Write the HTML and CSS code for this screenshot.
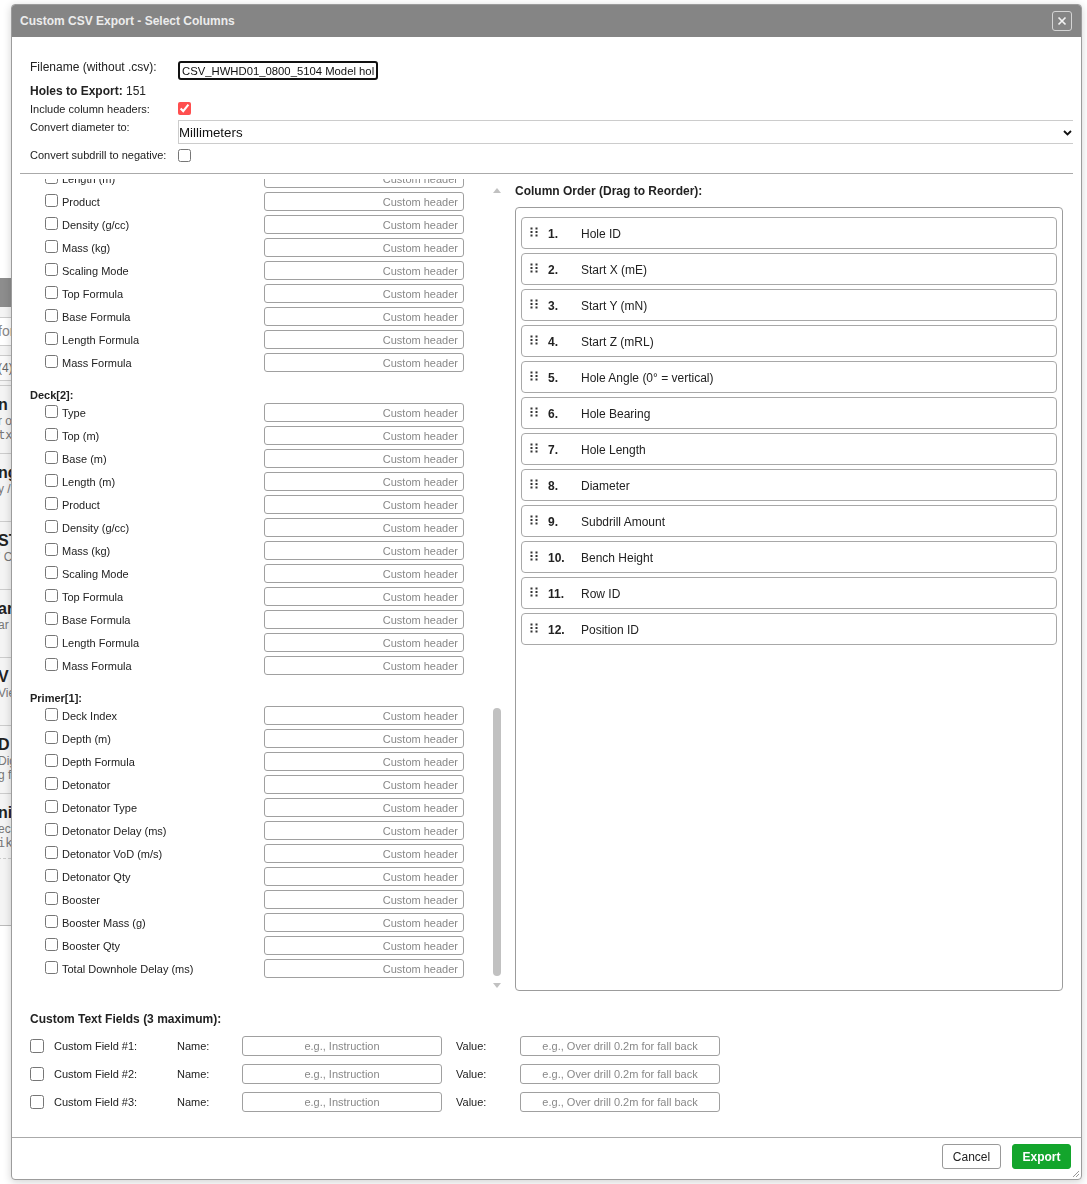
FILE: index.html
```html
<!DOCTYPE html>
<html lang="en">
<head>
  <meta charset="UTF-8">
  <title>Custom CSV Export</title>
  <link rel="stylesheet" href="styles.css">
</head>
<body>

  <div class="page">
    <div class="side">
      <div class="side-head">Patterns</div>
      <div class="side-search">for pattern</div>
      <div class="side-tabs">(4) holes</div>
      <div class="side-card"><b>n Options</b><span>r or</span><code>txt</code></div>
      <div class="side-card"><b>ng Tools</b><span>y / x</span></div>
      <div class="side-card"><b>ST Check</b><span>' Check</span></div>
      <div class="side-card"><b>ar Mode</b><span>ar list</span></div>
      <div class="side-card"><b>V View</b><span>View</span></div>
      <div class="side-card"><b>D Data</b><span>Dig data</span><span>g file</span></div>
      <div class="side-card tall"><b>nit Sec</b><span>ecl</span><code>ik</code><i></i></div>
    </div>
  </div>

  <div class="dlg">
    <div class="dlg-title">
      <span>Custom CSV Export - Select Columns</span>
      <button class="dlg-close">
        <svg width="10" height="10" viewBox="0 0 10 10"><path d="M1.5 1.5 L8.5 8.5 M8.5 1.5 L1.5 8.5" stroke="#f2f2f2" stroke-width="1.7"/></svg>
      </button>
    </div>

    <div class="dlg-body">
      <div class="opts">
        <div class="opt-row">
          <div class="opt-label big">Filename (without .csv):</div>
          <input class="fname" type="text" value="CSV_HWHD01_0800_5104 Model holes">
        </div>
        <div class="opt-row holes"><b>Holes to Export:</b>&nbsp;151</div>
        <div class="opt-row">
          <div class="opt-label">Include column headers:</div>
          <input class="chk red" type="checkbox" checked>
        </div>
        <div class="opt-row">
          <div class="opt-label">Convert diameter to:</div>
          <div class="sel-wrap">
            <select class="sel">
              <option>Millimeters</option>
              <option>Meters</option>
            </select>
            <svg class="sel-arrow" width="9" height="6" viewBox="0 0 9 6"><path d="M1 1 L4.5 4.5 L8 1" fill="none" stroke="#111" stroke-width="1.8"/></svg>
          </div>
        </div>
        <div class="opt-row">
          <div class="opt-label">Convert subdrill to negative:</div>
          <input class="chk" type="checkbox">
        </div>
      </div>

      <hr class="sep">

      <div class="cols">
        <div class="field-pane">
          <div class="field-list" id="fieldList"></div>
          <div class="vbar">
            <svg width="8" height="5" viewBox="0 0 8 5"><path d="M4 0 L8 5 L0 5 Z" fill="#c1c1c1"/></svg>
            <div class="vbar-track"><div class="vbar-thumb"></div></div>
            <svg width="8" height="5" viewBox="0 0 8 5"><path d="M0 0 L8 0 L4 5 Z" fill="#c1c1c1"/></svg>
          </div>
        </div>
        <div class="order">
          <div class="order-title">Column Order (Drag to Reorder):</div>
          <div class="order-box" id="orderBox"></div>
        </div>
      </div>

      <div class="custom">
        <div class="cf-title">Custom Text Fields (3 maximum):</div>
        <div class="cf-row">
          <input type="checkbox">
          <span class="cf-label">Custom Field #1:</span>
          <span class="cf-name">Name:</span>
          <input type="text" placeholder="e.g., Instruction">
          <span class="cf-value">Value:</span>
          <input type="text" placeholder="e.g., Over drill 0.2m for fall back">
        </div>
        <div class="cf-row">
          <input type="checkbox">
          <span class="cf-label">Custom Field #2:</span>
          <span class="cf-name">Name:</span>
          <input type="text" placeholder="e.g., Instruction">
          <span class="cf-value">Value:</span>
          <input type="text" placeholder="e.g., Over drill 0.2m for fall back">
        </div>
        <div class="cf-row">
          <input type="checkbox">
          <span class="cf-label">Custom Field #3:</span>
          <span class="cf-name">Name:</span>
          <input type="text" placeholder="e.g., Instruction">
          <span class="cf-value">Value:</span>
          <input type="text" placeholder="e.g., Over drill 0.2m for fall back">
        </div>
      </div>
    </div>

    <div class="dlg-foot">
      <button class="btn btn-cancel">Cancel</button>
      <button class="btn btn-export">Export</button>
    </div>

    <svg class="grip-corner" width="9" height="9" viewBox="0 0 9 9"><path d="M8 2 L2 8 M8 5 L5 8" stroke="#999" stroke-width="1"/></svg>
  </div>

  <script>
    const holeFields = [
      'Hole ID', 'Entity Name', 'Start X (mE)', 'Start Y (mN)', 'Start Z (mRL)',
      'Grade X (mE)', 'Grade Y (mN)', 'Grade Z (mRL)', 'End X (mE)', 'End Y (mN)',
      'End Z (mRL)', 'Hole Angle (0° = vertical)', 'Hole Bearing', 'Hole Length',
      'Diameter', 'Subdrill Amount', 'Subdrill Length', 'Bench Height', 'Row ID',
      'Position ID', 'Hole Type', 'Burden', 'Spacing', 'Hole Time', 'Initiation Time',
      'Connector Delay', 'Colour', 'Measured Length', 'Measured Mass', 'Measured Comment',
      'Rig', 'Water Depth', 'Stemming Length', 'Total Charge Mass', 'Powder Factor',
      'Deck Count', 'Primer Count', 'Hole Volume'
    ];
    const deckFields = [
      'Type', 'Top (m)', 'Base (m)', 'Length (m)', 'Product', 'Density (g/cc)',
      'Mass (kg)', 'Scaling Mode', 'Top Formula', 'Base Formula', 'Length Formula', 'Mass Formula'
    ];
    const primerFields = [
      'Deck Index', 'Depth (m)', 'Depth Formula', 'Detonator', 'Detonator Type',
      'Detonator Delay (ms)', 'Detonator VoD (m/s)', 'Detonator Qty', 'Booster',
      'Booster Mass (g)', 'Booster Qty', 'Total Downhole Delay (ms)'
    ];
    const checked = [
      'Hole ID', 'Start X (mE)', 'Start Y (mN)', 'Start Z (mRL)', 'Hole Angle (0° = vertical)',
      'Hole Bearing', 'Hole Length', 'Diameter', 'Subdrill Amount', 'Bench Height', 'Row ID', 'Position ID'
    ];

    const sections = [
      { title: 'Hole:', fields: holeFields },
      { title: 'Charging:', fields: ['Charge Config', 'Stemming Product', 'Stemming Length (m)', 'Air Deck (m)', 'Gas Bag'] },
      { title: 'Deck[1]:', fields: deckFields },
      { title: 'Deck[2]:', fields: deckFields },
      { title: 'Primer[1]:', fields: primerFields }
    ];

    let html = '';
    sections.forEach(function(sec) {
      html += '<div class="f-sec">' + sec.title + '</div>';
      sec.fields.forEach(function(f) {
        const on = sec.title === 'Hole:' && checked.includes(f) ? ' checked' : '';
        html += '<div class="f-row"><label><input type="checkbox"' + on + '>' + f + '</label>' +
                '<input type="text" placeholder="Custom header"></div>';
      });
    });
    const list = document.getElementById('fieldList');
    list.innerHTML = html;
    list.scrollTop = list.scrollHeight;

    let order = '';
    checked.forEach(function(f, i) {
      order += '<div class="order-item">' +
        '<svg class="grip" width="8" height="10" viewBox="0 0 8 10">' +
        '<rect x="0.5" y="0.5" width="2" height="2"/><rect x="5.5" y="0.5" width="2" height="2"/>' +
        '<rect x="0.5" y="4" width="2" height="2"/><rect x="5.5" y="4" width="2" height="2"/>' +
        '<rect x="0.5" y="7.5" width="2" height="2"/><rect x="5.5" y="7.5" width="2" height="2"/></svg>' +
        '<span class="num">' + (i + 1) + '.</span><span>' + f + '</span></div>';
    });
    document.getElementById('orderBox').innerHTML = order;
  </script>
</body>
</html>
```

FILE: styles.css
```css
body {
  margin: 0;
  background: #fff;
  font-family: 'Liberation Sans', Arial, sans-serif;
  color: #222;
}

/* page behind the dialog */
.page {
  padding-top: 278px;
}

.side {
  width: 300px;
  margin-left: -2px;
  background: #f4f4f4;
  border-bottom: 1px solid #bbb;
  font-size: 12px;
  color: #555;
}

.side-head {
  height: 29px;
  background: #8d8d8d;
  color: #8d8d8d;
}

.side-search {
  margin-top: 10px;
  height: 27px;
  line-height: 27px;
  background: #fff;
  border-top: 1px solid #ccc;
  border-bottom: 1px solid #ccc;
  font-size: 14px;
  color: #888;
}

.side-tabs {
  margin-top: 9px;
  height: 24px;
  line-height: 24px;
  border-top: 1px solid #ccc;
  border-bottom: 1px solid #ccc;
  background: #fafafa;
  color: #666;
}

.side-card {
  height: 64px;
  border-top: 1px solid #ccc;
  margin-top: 4px;
  padding-top: 10px;
  box-sizing: border-box;
  display: flex;
  flex-direction: column;
}

.side-card b {
  font-size: 16px;
  color: #222;
}

.side-card span,
.side-card code {
  font-size: 12px;
  color: #777;
}

.side-card.tall {
  height: 132px;
}

.side-card i {
  margin-top: 8px;
  border-top: 1px dashed #ccc;
}

/* dialog */
.dlg {
  position: fixed;
  left: 11px;
  top: 4px;
  width: 1071px;
  height: 1176px;
  box-sizing: border-box;
  border: 1px solid #9c9c9c;
  border-radius: 4px;
  background: #fff;
  box-shadow: 0 2px 8px rgba(0, 0, 0, 0.18);
  display: flex;
  flex-direction: column;
  overflow: hidden;
}

.dlg-title {
  flex: none;
  height: 32px;
  background: #858585;
  color: #ececec;
  font-size: 12px;
  font-weight: bold;
  display: flex;
  align-items: center;
  justify-content: space-between;
  padding: 0 9px 0 8px;
}

.dlg-close {
  width: 20px;
  height: 20px;
  padding: 0;
  border: 1px solid #d4d4d4;
  border-radius: 3px;
  background: transparent;
  display: flex;
  align-items: center;
  justify-content: center;
}

.dlg-body {
  flex: 1;
  min-height: 0;
  padding: 0 8px;
  display: flex;
  flex-direction: column;
}

.opts {
  padding: 24px 0 0 10px;
}

.opt-row {
  display: flex;
  align-items: flex-start;
  margin-top: 4px;
  font-size: 11px;
  line-height: 14px;
}

.opt-row:first-child {
  margin-top: 0;
}

.opt-label {
  width: 148px;
  flex: none;
}

.opt-label.big {
  font-size: 12px;
  margin-top: -1px;
}

.holes {
  font-size: 12px;
}

.fname {
  width: 200px;
  height: 19px;
  box-sizing: border-box;
  border: 2px solid #111;
  border-radius: 3px;
  padding: 0 2px;
  font-family: inherit;
  font-size: 11.3px;
  color: #111;
  outline: none;
}

.chk {
  width: 13px;
  height: 13px;
  margin: 0;
}

.opt-row:last-child .chk {
  margin-top: 1px;
}

.chk.red {
  accent-color: #ff4f4f;
}

.sel-wrap {
  position: relative;
  flex: 1;
}

.sel {
  width: 100%;
  height: 24px;
  appearance: none;
  border: 1px solid #ccc;
  border-right: none;
  border-radius: 0;
  background: #fff;
  padding: 0;
  font-family: inherit;
  font-size: 13.3px;
  color: #111;
}

.sel-arrow {
  position: absolute;
  right: 1px;
  top: 10px;
}

.sep {
  margin: 11px 0 0;
  border: none;
  border-top: 1px solid #aaa;
}

.cols {
  flex: none;
  height: 820px;
  display: grid;
  grid-template-columns: 484px 1fr;
  column-gap: 11px;
}

.field-pane {
  margin-top: 5px;
  min-height: 0;
  display: flex;
}

.field-list {
  flex: 1;
  overflow: hidden;
  padding: 0 0 14px 10px;
}

.vbar {
  width: 14px;
  flex: none;
  padding: 9px 0 6px;
  display: flex;
  flex-direction: column;
  align-items: center;
}

.vbar-track {
  flex: 1;
  display: flex;
  flex-direction: column;
  justify-content: flex-end;
  padding-bottom: 7px;
}

.vbar-thumb {
  width: 8px;
  height: 268px;
  border-radius: 4px;
  background: #c1c1c1;
}

.f-sec {
  margin-top: 14px;
  margin-bottom: -1px;
  font-size: 11px;
  font-weight: bold;
  line-height: 14px;
}

.f-row {
  height: 23px;
  display: flex;
  align-items: center;
  padding-left: 15px;
}

.f-row label {
  width: 219px;
  display: flex;
  align-items: center;
  font-size: 11px;
}

.f-row label input {
  width: 13px;
  height: 13px;
  margin: -3px 4px 0 0;
}

.f-row > input {
  width: 200px;
  height: 19px;
  box-sizing: border-box;
  border: 1px solid #a0a0a0;
  border-radius: 3px;
  padding: 0 5px;
  text-align: right;
  font-family: inherit;
  font-size: 11px;
}

input::placeholder {
  color: #888;
}

.order {
  padding: 9px 10px 3px 0;
  display: flex;
  flex-direction: column;
}

.order-title {
  font-size: 12px;
  font-weight: bold;
  line-height: 16px;
  margin-bottom: 8px;
}

.order-box {
  flex: 1;
  border: 1px solid #9c9c9c;
  border-radius: 4px;
  padding: 9px 5px;
}

.order-item {
  height: 32px;
  box-sizing: border-box;
  border: 1px solid #a8a8a8;
  border-radius: 4px;
  margin-bottom: 4px;
  padding-left: 8px;
  display: flex;
  align-items: center;
  font-size: 12px;
  line-height: 14px;
  padding-top: 1px;
}

.grip {
  fill: #333;
  margin: -3px 10px 0 0;
}

.num {
  width: 33px;
  font-weight: bold;
}

.custom {
  padding-left: 10px;
}

.cf-title {
  margin-top: 17px;
  font-size: 12px;
  font-weight: bold;
  line-height: 16px;
}

.cf-row {
  height: 20px;
  margin-top: 8px;
  display: flex;
  align-items: center;
  font-size: 11px;
}

.cf-title + .cf-row {
  margin-top: 9px;
}

.cf-row input[type="checkbox"] {
  width: 14px;
  height: 14px;
  margin: 0 10px 0 0;
}

.cf-label {
  width: 123px;
}

.cf-name {
  width: 65px;
}

.cf-value {
  width: 64px;
  margin-left: 14px;
}

.cf-row input[type="text"] {
  width: 200px;
  height: 20px;
  box-sizing: border-box;
  border: 1px solid #a0a0a0;
  border-radius: 3px;
  text-align: center;
  font-family: inherit;
  font-size: 11px;
}

.dlg-foot {
  flex: none;
  height: 42px;
  box-sizing: border-box;
  border-top: 1px solid #aaa;
  padding: 6px 10px 0 0;
  display: flex;
  justify-content: flex-end;
  align-items: flex-start;
  gap: 11px;
}

.btn {
  width: 59px;
  height: 25px;
  border-radius: 3px;
  font-family: inherit;
  font-size: 12px;
  cursor: pointer;
}

.btn-cancel {
  background: #fff;
  border: 1px solid #999;
  color: #222;
}

.btn-export {
  background: #13a52c;
  border: 1px solid #13a52c;
  color: #fff;
  font-weight: bold;
}

.grip-corner {
  position: absolute;
  right: 1px;
  bottom: 1px;
}
```
